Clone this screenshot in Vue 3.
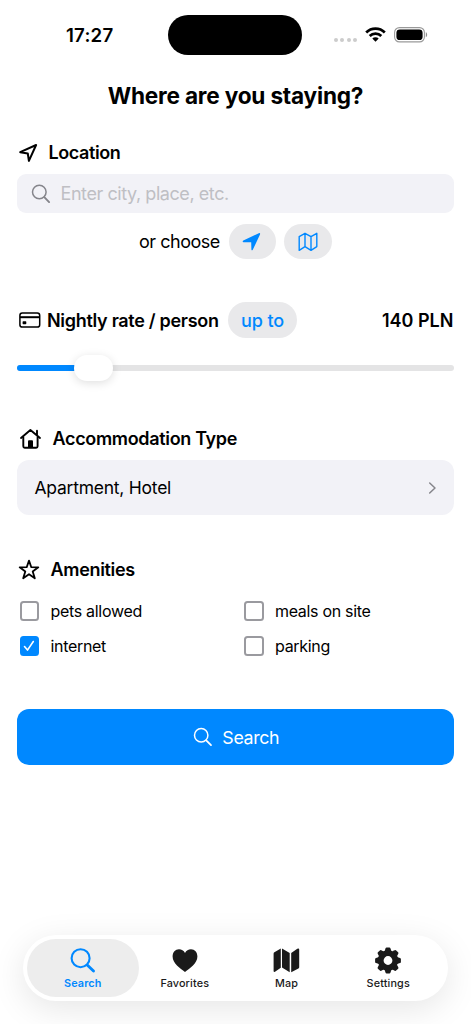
<script setup>
import { ref } from 'vue'

const rate = ref(140)
const fill = 17.5
const amenities = ref([
  { name: 'pets allowed', on: false },
  { name: 'meals on site', on: false },
  { name: 'internet', on: true },
  { name: 'parking', on: false },
])
const tabs = ['Search', 'Favorites', 'Map', 'Settings']
const active = ref('Search')
</script>

<template>
  <div class="screen">
    <header class="status">
      <span class="time">17:27</span>
      <div class="island"></div>
      <div class="signals">
        <div class="dots"><i v-for="n in 4" :key="n"></i></div>
        <svg class="wifi" width="21" height="15" viewBox="0 0 21 15">
          <g fill="none" stroke="#000" stroke-width="2.7">
            <path d="M1.2 5.5a13.2 13.2 0 0 1 18.6 0" />
            <path d="M4.7 9a8.2 8.2 0 0 1 11.6 0" />
          </g>
          <path d="M10.5 14.7 7.3 11.5a4.6 4.6 0 0 1 6.4 0z" />
        </svg>
        <svg width="34" height="16" viewBox="0 0 34 16">
          <rect x=".6" y=".6" width="29.8" height="14.3" rx="4.8" fill="none" stroke="#000" stroke-opacity=".4" stroke-width="1.1" />
          <rect x="2.4" y="2.4" width="26.2" height="10.7" rx="3.4" />
          <path d="M31.8 5.3c1.8.6 1.8 4.3 0 4.9z" fill-opacity=".45" />
        </svg>
      </div>
    </header>

    <main>
      <h1><span>Where are you staying?</span></h1>

      <section class="location">
        <h2>
          <svg width="20" height="20" viewBox="0 0 20 20" fill="none" stroke="#000" stroke-width="2" stroke-linejoin="round">
            <path d="M2.200 9.200 18.100 2 10.900 17.900 9.800 10.500z" />
          </svg>
          <span class="t-location">Location</span>
        </h2>
        <div class="field">
          <svg width="20" height="20" viewBox="0 0 20 20" fill="none" stroke="#85858b" stroke-linecap="round">
            <circle cx="8.3" cy="8" r="6.8" stroke-width="1.5" />
            <path d="m13.3 13.2 4.8 4.9" stroke-width="1.9" />
          </svg>
          <span>Enter city, place, etc.</span>
        </div>
        <div class="choose">
          <span>or choose</span>
          <button class="pill here">
            <svg width="20" height="20" viewBox="0 0 20 20">
              <path d="M1.300 8.600 16.800 1.200q1.800-.5 1.200 1.200L10.800 17.700q-1.100 1.400-1.400-.2L9.200 10.300 1.600 10.200q-1.700-.4-.3-1.600z" fill="#0088ff" />
            </svg>
          </button>
          <button class="pill map">
            <svg width="20" height="20" viewBox="0 0 20 20" fill="none" stroke="#0088ff" stroke-width="1.4" stroke-linejoin="round">
              <path d="M1.2 4.6 7 1.3l6 3.3 5.8-3.3v13.3L13 18.3l-6-3.6-5.8 3.6zM7 1.3v13.4M13 4.6v13.7" />
            </svg>
          </button>
        </div>
      </section>

      <section class="rate">
        <div class="rate-row">
          <svg width="22" height="17" viewBox="0 0 22 17">
            <rect x=".9" y="1.1" width="19.8" height="14" rx="2.4" fill="none" stroke="#000" stroke-width="1.5" />
            <path d="M1 4.2h19.8v2H1z" />
            <rect x="3.6" y="9.2" width="3.7" height="3" rx=".7" />
          </svg>
          <strong class="t-rate">Nightly rate / person</strong>
          <button class="pill upto"><span>up to</span></button>
          <strong class="amount">{{ rate }} PLN</strong>
        </div>
        <div class="track">
          <div class="filled" :style="{ width: fill + '%' }"></div>
          <div class="thumb" :style="{ left: fill + '%' }"></div>
        </div>
      </section>

      <section class="kind">
        <h2>
          <svg width="24" height="22" viewBox="0 0 24 22">
            <g fill="none" stroke="#000" stroke-width="1.9" stroke-linecap="round" stroke-linejoin="round">
              <path d="M2 10 11.4 2 21 10M18 7.2V2.8" />
              <path d="M4.3 9.2v9q0 1.5 1.4 1.5h11.5q1.4 0 1.4-1.5v-9" />
            </g>
            <path d="M9 19.5v-6.2q0-1 1-1h3q1 0 1 1v6.2z" />
          </svg>
          <span class="t-kind">Accommodation Type</span>
        </h2>
        <div class="select">
          <span>Apartment, Hotel</span>
          <svg width="8" height="14" viewBox="0 0 8 14" fill="none" stroke="#85858b" stroke-width="1.5" stroke-linecap="round" stroke-linejoin="round">
            <path d="m.7 2 5.300 5-5.300 5" />
          </svg>
        </div>
      </section>

      <section class="amenities">
        <h2>
          <svg width="22" height="22" viewBox="0 0 22 22" fill="none" stroke="#000" stroke-width="1.8" stroke-linejoin="round">
            <path d="m11 1.6 2.300 6.600 7 .1-5.600 4.200 2.100 6.800L11 15.200l-5.800 4.100 2.100-6.800L1.700 8.300l7-.1z" />
          </svg>
          <span class="t-amen">Amenities</span>
        </h2>
        <div class="checks">
          <div v-for="a in amenities" :key="a.name" class="check" @click="a.on = !a.on">
            <span class="box" :class="{ on: a.on }">
              <svg v-if="a.on" width="12" height="12" viewBox="0 0 12 12" fill="none" stroke="#fff" stroke-width="1.6" stroke-linecap="round" stroke-linejoin="round">
                <path d="m1.5 6.6 3 3.5 5.8-8.6" />
              </svg>
            </span>
            <span>{{ a.name }}</span>
          </div>
        </div>
      </section>

      <button class="submit">
        <svg width="20" height="20" viewBox="0 0 20 20" fill="none" stroke="#fff" stroke-linecap="round">
          <circle cx="8.2" cy="8.2" r="6.7" stroke-width="1.5" />
          <path d="m13.2 13.3 4.8 4.8" stroke-width="1.8" />
        </svg>
        <span>Search</span>
      </button>
    </main>

    <nav class="tabs">
      <div v-for="t in tabs" :key="t" class="tab" :class="{ active: active === t }" @click="active = t">
        <svg v-if="t === 'Search'" width="28" height="28" viewBox="0 0 28 28" fill="none" stroke="currentColor" stroke-linecap="round">
          <circle cx="11.600" cy="12.200" r="9" stroke-width="2.1" />
          <path d="m18.500 19.200 6 5.800" stroke-width="2.9" />
        </svg>
        <svg v-else-if="t === 'Favorites'" width="28" height="28" viewBox="0 0 28 28" fill="currentColor">
          <path d="M14 25.900C9.200 22.600 1.600 17.300 1.600 10.600 1.600 6.300 4.300 3.300 8 3.300c2.600 0 4.700 1.300 6 3.700 1.300-2.400 3.400-3.700 6-3.700 3.700 0 6.400 3 6.400 7.300 0 6.700-7.600 12-12.400 15.300z" />
        </svg>
        <svg v-else-if="t === 'Map'" width="28" height="28" viewBox="0 0 28 28" fill="currentColor">
          <path d="M.6 7.700q0-.9.8-1.400L7.800 2.500v19.300L2 25.800q-1.400.5-1.400-.8zM9 2.500 16.700 7v19.200L9 21.600zM18.200 7l6.100-4.300q1.900-.8 1.900.8v17.700q0 .8-.8 1.300L18.200 26.200z" />
        </svg>
        <svg v-else width="28" height="28" viewBox="-14 -14.500 28 28" fill="currentColor">
          <circle r="7.300" fill="none" stroke="currentColor" stroke-width="5.800" />
          <path v-for="n in 8" :key="n" d="M-3.500-9 L-2.500-12 Q-2.200-12.900-1.400-12.900 H1.400 Q2.200-12.900 2.500-12 L3.500-9z" :transform="`rotate(${n * 45})`" />
        </svg>
        <span>{{ t }}</span>
      </div>
    </nav>
  </div>
</template>

<style>
body { margin: 0; background: #fff; }
</style>

<style scoped>
* { box-sizing: border-box; }
.screen { width: 471px; height: 1024px; display: flex; flex-direction: column; overflow: hidden; background: #fff; color: #000; font-family: Inter, "Liberation Sans", sans-serif; font-size: 17.5px; line-height: 24px; white-space: nowrap; }
svg { display: block; flex: none; overflow: visible; }
button { border: 0; padding: 0; font: inherit; }
.status { height: 70px; flex: none; display: grid; grid-template-columns: 168.400px 134px 1fr; align-items: center; }
.time { padding: 2px 0 0 66px; font-size: 18.7px; font-weight: 600; letter-spacing: .2px; }
.island { height: 40px; border-radius: 20px; background: #000; }
.signals { display: flex; align-items: center; padding-left: 31.500px; }
.dots { display: flex; gap: 2.400px; margin: 10px 7.500px 0 0; }
.dots i { width: 4px; height: 4px; border-radius: 50%; background: #ccc; }
.wifi { margin: 0 8px 1px 0; }
main { padding: 0 17px; }
h1 { margin: 11px 0 0; height: 30px; line-height: 30px; font-size: 22.6px; font-weight: 700; text-align: center; letter-spacing: -.2px; }
h2 { margin: 0; height: 24px; display: flex; align-items: center; font-size: 18px; font-weight: 600; letter-spacing: -.33px; }
.location { margin-top: 30px; }
.location h2 svg { margin: 0 10.500px 0 1px; }
.t-location { letter-spacing: -.4px; }
.field { margin-top: 9.400px; height: 38.5px; padding-left: 14px; border-radius: 9px; background: #f2f2f7; display: flex; align-items: center; gap: 9.500px; color: #bfbfc4; font-size: 18px; letter-spacing: -.43px; }
.field span { padding-top: 1px; }
.choose { height: 35px; margin-top: 11.200px; padding-left: 122px; display: flex; align-items: center; font-size: 18px; letter-spacing: -.48px; }
.choose > span { width: 89.500px; padding-top: 1px; }
.pill { display: flex; align-items: center; justify-content: center; background: #e9e9eb; color: #0088ff; border-radius: 18px; }
.here { width: 47px; height: 35px; }
.map { width: 48px; height: 35px; margin-left: 8.500px; }
.rate { margin-top: 43px; }
.rate-row { height: 36px; display: flex; align-items: center; font-size: 18px; }
.rate-row > svg { margin: 0 6.500px 0 1.500px; }
strong { font-weight: 600; padding-top: 1px; }
.t-rate { width: 181px; letter-spacing: -.3px; }
.upto { width: 69px; height: 36px; font-weight: 500; letter-spacing: -.1px; }
.upto span { padding-top: 1px; }
.amount { margin-left: auto; padding-right: .6px; }
.track { position: relative; margin-top: 26.500px; height: 6.500px; border-radius: 4px; background: #e4e4e5; }
.filled { height: 100%; border-radius: 4px 0 0 4px; background: #0088ff; }
.thumb { position: absolute; top: -9.700px; width: 39.500px; height: 26px; margin-left: -19.500px; border-radius: 13px; background: #fff; box-shadow: 0 2px 10px rgba(0, 0, 0, .13); }
.kind { margin-top: 55.500px; }
.kind h2 svg { margin-right: 10px; margin-left: 1.500px; }
.select { margin-top: 9.500px; height: 55px; padding: 0 17.500px; border-radius: 12px; background: #f2f2f7; display: flex; align-items: center; justify-content: space-between; letter-spacing: -.24px; }
.amenities { margin-top: 43px; }
.amenities h2 svg { margin: 0 10.500px 0 1px; }
.checks { margin-top: 17px; padding-left: 2.500px; display: grid; grid-template-columns: 224.500px 1fr; row-gap: 11px; font-size: 16px; letter-spacing: -.31px; }
.check { height: 24px; display: flex; align-items: center; gap: 11.300px; }
.box { width: 19.700px; height: 19.500px; border: 2px solid #9a9a9f; border-radius: 3.500px; display: flex; align-items: center; justify-content: center; flex: none; }
.box.on { border-color: #0088ff; background: #0088ff; }
.submit { margin-top: 51px; width: 100%; height: 56px; border-radius: 12px; background: #0088ff; color: #fff; display: flex; align-items: center; justify-content: center; gap: 9.500px; padding-left: 1px; font-size: 17.8px; letter-spacing: -.37px; }
.submit span { padding-top: 1px; }
.tabs { margin: auto 0 23px 23px; width: 425px; height: 66px; padding: 4px; border-radius: 33px; background: #fff; box-shadow: 0 8px 34px rgba(0, 0, 0, .1); display: grid; grid-template-columns: 111.500px 92.500px 111px 92.500px; color: #1a1a1a; flex: none; }
.tab { border-radius: 29px; display: flex; flex-direction: column; align-items: center; padding-top: 7px; font-size: 10.800px; font-weight: 500; letter-spacing: .15px; line-height: 16px; }
.tab span { margin-top: 2px; }
.tab.active { background: #ededed; color: #0088ff; font-weight: 600; }
</style>
